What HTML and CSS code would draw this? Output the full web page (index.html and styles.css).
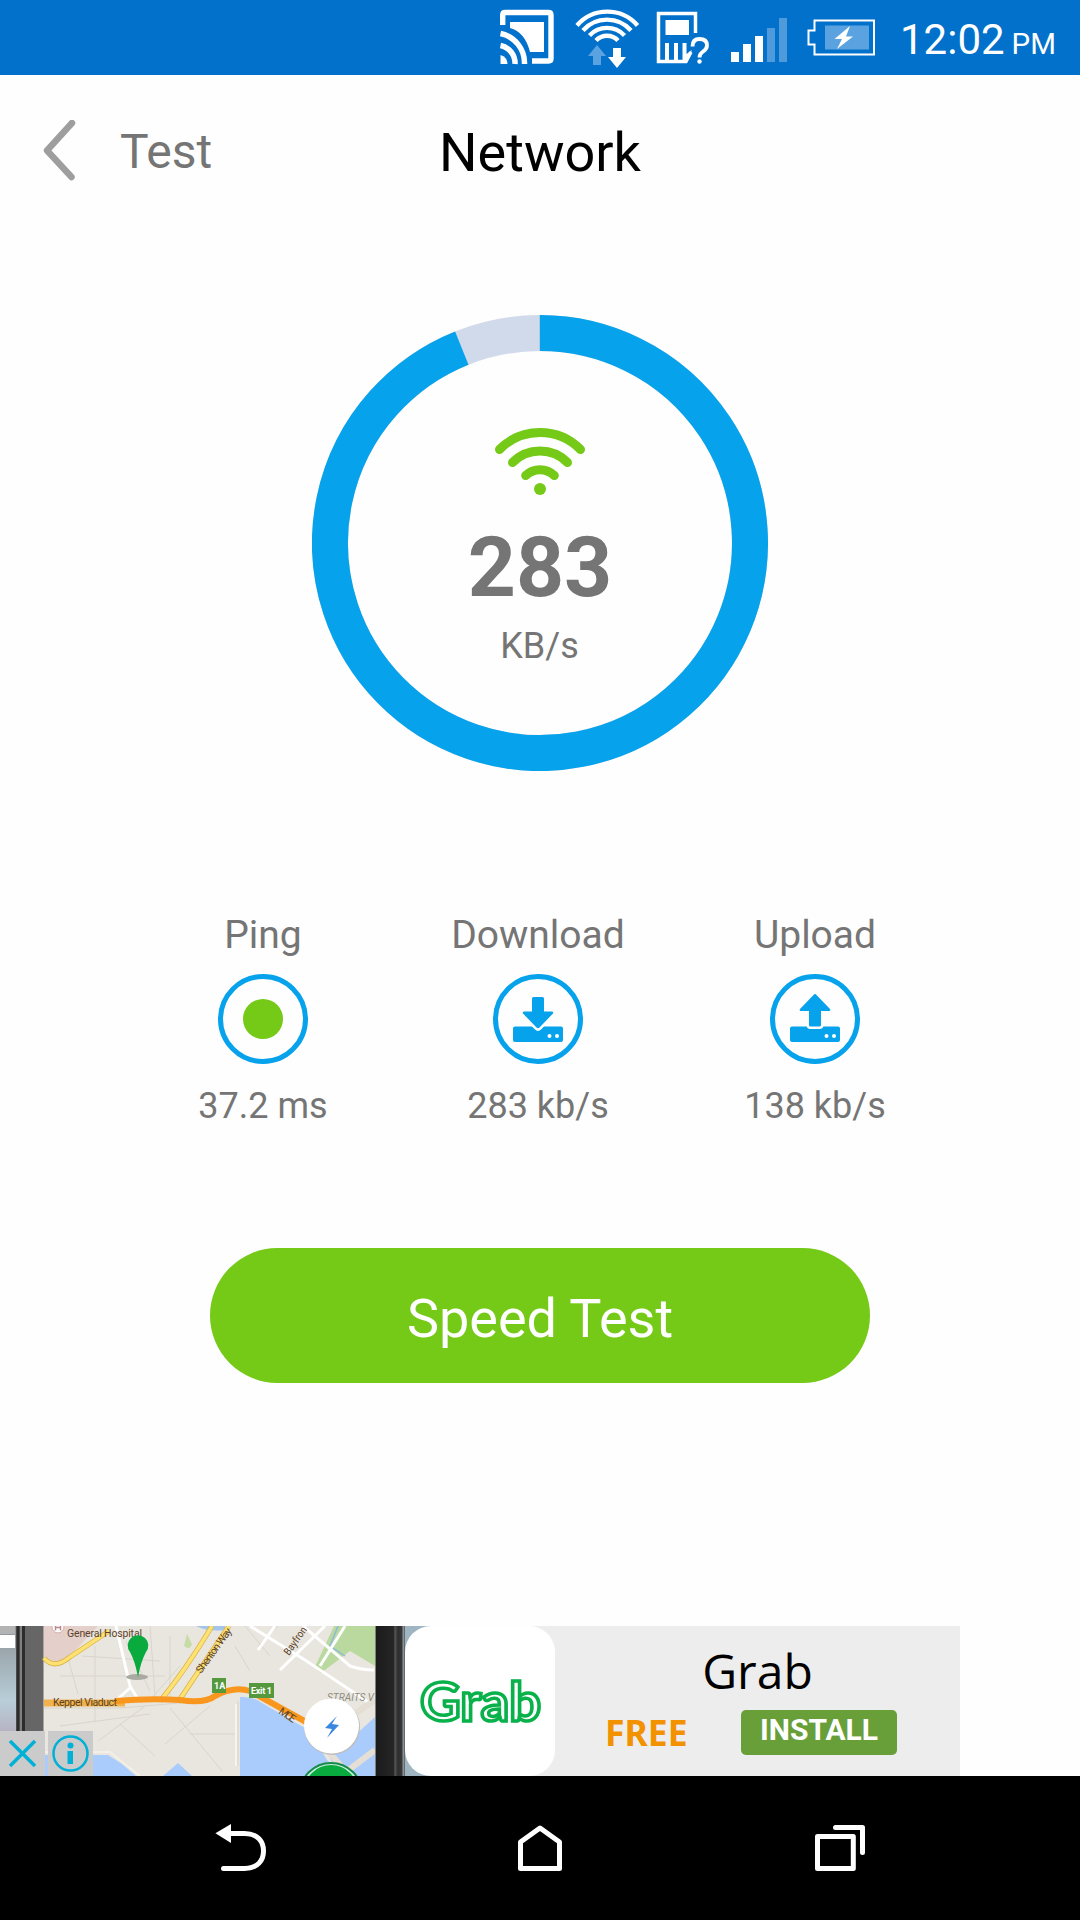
FILE: index.html
```html
<!DOCTYPE html>
<html lang="en">
<head>
  <meta charset="UTF-8">
  <meta name="viewport" content="width=device-width, initial-scale=1.0">
  <title>Network</title>
  <link rel="stylesheet" href="styles.css">
</head>
<body>
  <div class="status-bar">
    <svg class="status-icons" width="380" height="75" viewBox="500 0 380 75" fill="none">
      <!-- cast -->
      <path d="M502.700 25V15Q502.700 12.500 505.200 12.500H548.500Q551 12.500 551 15V58.500Q551 61 548.500 61H532" stroke="#fff" stroke-width="5.400"/>
      <path d="M510 22H544V52H530Q525 32 510 28Z" fill="#fff"/>
      <path d="M500.500 33.500A30 30 0 0 1 524.500 64M500.500 45.500A18 18 0 0 1 515 64" stroke="#fff" stroke-width="5.500"/>
      <path d="M500.500 55A9 9 0 0 1 507.500 64H500.500Z" fill="#fff"/>
      <!-- wifi -->
      <g stroke="#fff" stroke-width="4.400">
        <path d="M577 25.500A40 40 0 0 1 637.500 25.500"/>
        <path d="M583 30.500A32 32 0 0 1 631 30.500"/>
        <path d="M589.500 35.500A24 24 0 0 1 624.500 35.500"/>
        <path d="M596 40.500A15 15 0 0 1 618 40.500"/>
      </g>
      <path d="M597 45L606 56H601V65H593V56H588Z" fill="#5ba2e0"/>
      <path d="M613 48H621V57H626L617 68L608 57H613Z" fill="#fff"/>
      <!-- sim -->
      <path d="M695.500 33V13.500H658.500V61.500H686L691 52" stroke="#fff" stroke-width="3.500"/>
      <path d="M665.500 20H689V35H665.500ZM665 43H669V60H665ZM674 43H678V60H674ZM682.500 43H686.500V54L692 50L687 62H682.500Z" fill="#fff"/>
      <path d="M692.500 46.500Q692.500 39 699.500 39Q707 39 707 45.500Q707 49 702.500 52Q699.500 54 699.500 57.500" stroke="#fff" stroke-width="3.800"/>
      <circle cx="699.500" cy="61.500" r="2.200" fill="#fff"/>
      <!-- signal -->
      <path d="M731 52H739V62H731ZM743 44H751V62H743ZM755 36H763V62H755Z" fill="#fff"/>
      <path d="M767 28H775V62H767ZM779 18H787V62H779Z" fill="#4f9adb"/>
      <!-- battery -->
      <path d="M814.500 20.500H874V54.500H814.500V44.500H808.500V30.500H814.500Z" stroke="#fff" stroke-width="2"/>
      <path d="M825 25.500H869V49.500H825Z" fill="#5ba2e0"/>
      <path d="M850 26L834.500 39H842L837 49L853 36.500H846Z" fill="#fff"/>
    </svg>
    <span class="clock">12:02</span><span class="meridiem">PM</span>
  </div>

  <div class="header">
    <div class="back">
      <svg width="34" height="62" viewBox="0 0 34 62" fill="none">
        <path d="M29 3L4 30.500L28.500 57" stroke="#9e9e9e" stroke-width="6.500" stroke-linecap="round" stroke-linejoin="round"/>
      </svg>
      <span>Test</span>
    </div>
    <h1>Network</h1>
  </div>

  <div class="gauge">
    <svg class="ring" width="456" height="456" viewBox="0 0 456 456" fill="none" stroke-width="36">
      <circle cx="228" cy="228" r="210" stroke="#d0daea"/>
      <path d="M227.800 18A210 210 0 1 1 149.800 33.100" stroke="#06a2eb"/>
    </svg>
    <svg width="92" height="70" viewBox="0 0 92 70" fill="none" stroke="#74ca16" stroke-width="9" stroke-linecap="round">
      <path d="M5.500 22.500A56.700 56.700 0 0 1 86.500 22.500"/>
      <path d="M18.500 35.500A38.900 38.900 0 0 1 73.500 35.500"/>
      <path d="M31.700 48.500A20.500 20.500 0 0 1 60.300 48.500"/>
      <circle cx="46" cy="62" r="6" fill="#74ca16" stroke="none"/>
    </svg>
    <div class="speed">283</div>
    <div class="unit">KB/s</div>
  </div>

  <div class="stats">
    <div class="stat">
      <div class="label">Ping</div>
      <svg width="90" height="90" viewBox="0 0 90 90">
        <circle cx="45" cy="45" r="42.500" fill="none" stroke="#06a2eb" stroke-width="5"/>
        <circle cx="45" cy="45" r="20" fill="#74ca16"/>
      </svg>
      <div class="value">37.2 ms</div>
    </div>
    <div class="stat">
      <div class="label">Download</div>
      <svg width="90" height="90" viewBox="0 0 90 90">
        <circle cx="45" cy="45" r="42.500" fill="none" stroke="#06a2eb" stroke-width="5"/>
        <rect x="20" y="52.500" width="50" height="15.500" rx="2" fill="#06a2eb"/>
        <path d="M40.500 23H49.500Q51 23 51 24.500V37.500H59Q61 38 60 39.500L46.500 53.500Q45 55 43.500 53.500L30 39.500Q29 38 31 37.500H39V24.500Q39 23 40.500 23Z" fill="#06a2eb" stroke="#fefefe" stroke-width="5" paint-order="stroke"/>
        <circle cx="56.500" cy="62" r="2" fill="#fefefe"/>
        <circle cx="64" cy="62" r="2" fill="#fefefe"/>
      </svg>
      <div class="value">283 kb/s</div>
    </div>
    <div class="stat">
      <div class="label">Upload</div>
      <svg width="90" height="90" viewBox="0 0 90 90">
        <circle cx="45" cy="45" r="42.500" fill="none" stroke="#06a2eb" stroke-width="5"/>
        <rect x="20" y="52.500" width="50" height="15.500" rx="2" fill="#06a2eb"/>
        <path d="M43.500 21Q45 19 46.500 21L60 35Q61 36.500 59 37H51V51Q51 52.500 49.500 52.500H40.500Q39 52.500 39 51V37H31Q29 36.500 30 35Z" fill="#06a2eb" stroke="#fefefe" stroke-width="5" paint-order="stroke"/>
        <circle cx="56.500" cy="62" r="2" fill="#fefefe"/>
        <circle cx="64" cy="62" r="2" fill="#fefefe"/>
      </svg>
      <div class="value">138 kb/s</div>
    </div>
  </div>

  <button class="btn">Speed Test</button>

  <div class="ad">
    <svg class="ad-map" width="405" height="150" viewBox="0 0 405 150" fill="none">
      <defs>
        <linearGradient id="photo" x1="0" y1="0" x2="0" y2="1">
          <stop offset="0" stop-color="#8d9498"/>
          <stop offset=".5" stop-color="#b8ced8"/>
          <stop offset="1" stop-color="#b58ba5"/>
        </linearGradient>
        <linearGradient id="edge">
          <stop offset="0" stop-color="#1a1a1a"/>
          <stop offset=".6" stop-color="#262626"/>
          <stop offset=".65" stop-color="#555"/>
          <stop offset=".75" stop-color="#2c2c2c"/>
          <stop offset="1" stop-color="#444"/>
        </linearGradient>
      </defs>
      <rect width="405" height="150" fill="#e9e6df"/>
      <!-- left phone edge -->
      <rect width="18" height="150" fill="url(#photo)"/>
      <rect width="15" height="8" fill="#b3b3b3"/>
      <rect y="9" width="15" height="13" fill="#fff"/>
      <rect x="16" width="27.500" height="150" fill="#666"/>
      <path d="M18 0V150M23.500 0V150" stroke="#2c2c2c" stroke-width="3"/>
      <path d="M21 0V150" stroke="#999"/>
      <!-- areas -->
      <path d="M44 0H98L70 30Q58 42 44 34Z" fill="#e5cfcb"/>
      <path d="M196 0H225V4Q208 6 196 0Z" fill="#a3c5ea"/>
      <path d="M334 0H375V40L350 25L321 47L315 41Z" fill="#bad99f"/>
      <path d="M187 8L192 18Q190 25 184 20Z" fill="#c7dca5"/>
      <path d="M44 129H108L122 138L136 150H44ZM163 150L178 137L192 150ZM240 71Q252 70 262 77L310 105L327 134L345 150H240ZM375 91V150H340L330 132Z" fill="#a9ccfd"/>
      <path d="M44 126H110L140 150" stroke="#f3f0ea" stroke-width="2"/>
      <path d="M338 0L330 20L345 30" stroke="#8fb9dd" stroke-width="1.500"/>
      <!-- minor streets -->
      <g stroke="#d9d5cc">
        <path d="M44 82H120L215 74M66 25L78 68M60 50H165M82 30L160 35M95 20V95M150 0L155 70M126 15L150 65M170 10V75M120 98L155 130M60 100L150 88M98 115L145 80M165 118L210 80M170 82L222 145M180 40L150 74M190 108H235M238 75V140M235 20L250 45M278 0L258 20M245 0L270 30"/>
      </g>
      <path d="M116 0L130 60L139 75M130 62L112 78M250 0L305 34L371 78M275 0L258 24M325 0L280 44M345 0L320 40M303 0L350 40Q362 44 374 44" stroke="#fff" stroke-width="3"/>
      <path d="M236 140V78" stroke="#f6f4ee" stroke-width="2"/>
      <path d="M44 32Q54 44 70 31L109 5M212 0Q185 45 160 75M229 0L178 76" stroke="#d8b445" stroke-width="5"/>
      <path d="M44 32Q54 44 70 31L109 5M212 0Q185 45 160 75M229 0L178 76" stroke="#ffe073" stroke-width="3.500"/>
      <path d="M306 99L335 133L346 146L375 124M340 98L375 74" stroke="#e4ded4" stroke-width="6"/>
      <!-- expressway -->
      <path d="M44 77H125" stroke="#f2b34c" stroke-width="7"/>
      <path d="M115 75Q150 72 180 74Q204 78 215 70Q234 60 250 65L308 97" stroke="#f8961d" stroke-width="6"/>
      <!-- labels -->
      <g class="map-label">
        <circle cx="58" cy="1" r="6" fill="#fff" stroke="#d5aba8"/>
        <path d="M55.500 0V4.500M60.500 0V4.500M55.500 1.500H60.500" stroke="#b98a88" stroke-width="1.500"/>
        <text x="67" y="11" textLength="75">General Hospital</text>
        <text x="53" y="80" textLength="64">Keppel Viaduct</text>
        <text transform="translate(201 48) rotate(-54)" textLength="53">Shenton Way</text>
        <text transform="translate(289 30) rotate(-55)" textLength="32" lengthAdjust="spacingAndGlyphs">Bayfron</text>
        <text transform="translate(278 87) rotate(34)" textLength="18">MCE</text>
        <text class="faded" x="327" y="75" textLength="47" lengthAdjust="spacingAndGlyphs">STRAITS V</text>
      </g>
      <path d="M212 52H226V67H212ZM249 57H274V72H249Z" fill="#55993f"/>
      <text class="exit" x="214" y="63">1A</text>
      <text class="exit" x="251" y="68" textLength="21">Exit 1</text>
      <!-- pin -->
      <ellipse cx="137" cy="51" rx="11" ry="3" fill="#a9aaa2"/>
      <path d="M138 51Q135 35 130 26A10.300 10.300 0 1 1 146 26Q141 35 138 51Z" fill="#09ab3f"/>
      <!-- quick booking -->
      <circle cx="332" cy="101" r="28" fill="#bdbdbd"/>
      <circle cx="331.500" cy="100" r="27.500" fill="#fff"/>
      <path d="M337 90L325 102L332 103L327 112L339 99L332 98Z" fill="#3a86e0"/>
      <circle cx="331" cy="166" r="28" fill="#09ab3f" stroke="#c9eee2" stroke-width="2"/>
      <circle cx="331" cy="168" r="31" stroke="#168b46" stroke-width="2"/>
      <!-- right phone edge -->
      <rect x="375.500" width="30" height="150" fill="url(#edge)"/>
      <path d="M403.500 0V150" stroke="#8a9296" stroke-width="2"/>
      <!-- ad badges -->
      <path d="M0 105H45V150H0ZM48 105H93V150H48Z" fill="#cbcbcb"/>
      <path d="M10 115L35 140M35 115L10 140" stroke="#00b0d6" stroke-width="3.500"/>
      <circle cx="70.500" cy="127.500" r="17" stroke="#00b0d6" stroke-width="2.500"/>
      <circle cx="70.500" cy="119.500" r="3" fill="#00b0d6"/>
      <path d="M67.500 125H73V138H67.500Z" fill="#00b0d6"/>
    </svg>
    <div class="ad-logo">
      <svg width="150" height="150" viewBox="0 0 150 150">
        <text class="wordmark" x="15" y="95" textLength="121" lengthAdjust="spacingAndGlyphs">Grab</text>
      </svg>
    </div>
    <div class="ad-info">
      <div class="ad-title">Grab</div>
      <div class="ad-row">
        <span class="price">FREE</span>
        <span class="install">INSTALL</span>
      </div>
    </div>
  </div>

  <div class="nav-bar">
    <svg width="54" height="54" viewBox="213 1820 54 54" fill="none" stroke="#fff" stroke-width="5" stroke-linecap="round">
      <path d="M229 1833.400H244.500C258 1833.400 263.500 1842 263.500 1851S258 1868.500 244.500 1868.500H223.500"/>
      <path d="M215.400 1833.300L231 1824V1843Z" fill="#fff" stroke="none"/>
    </svg>
    <svg width="54" height="54" viewBox="513 1820 54 54" fill="none" stroke="#fff" stroke-width="5" stroke-linejoin="round">
      <path d="M540 1828L559.500 1842V1868.500H520.500V1842Z"/>
    </svg>
    <svg width="54" height="54" viewBox="813 1820 54 54" fill="none" stroke="#fff" stroke-width="5" stroke-linecap="round" stroke-linejoin="round">
      <path d="M817.500 1836.500H853.300V1868.500H817.500Z"/>
      <path d="M835.500 1827.500H862.500V1852.500"/>
    </svg>
  </div>
</body>
</html>
```
FILE: styles.css
```css
* {
  box-sizing: border-box;
}
body {
  font-family: Roboto, sans-serif;
  background-color: #fefefe;
  color: #757575;
  display: flex;
  flex-direction: column;
  height: 1920px;
  margin: 0;
  overflow: hidden;
}
svg {
  display: block;
  flex: none;
}
.status-bar {
  display: flex;
  align-items: baseline;
  height: 75px;
  padding-left: 500px;
  background-color: #0271cb;
  color: white;
  line-height: 79px;
  white-space: nowrap;
}
.status-icons {
  align-self: flex-start;
}
.clock {
  margin-left: 20px;
  font-size: 42px;
}
.meridiem {
  margin-left: 7px;
  font-size: 29.5px;
}
.header {
  display: grid;
  grid-template-columns: 1fr auto 1fr;
  align-items: center;
  height: 155px;
  padding: 0 43px;
}
.back {
  display: flex;
  align-items: center;
  gap: 43px;
  height: 62px;
  margin-bottom: 3px;
  font-size: 48px;
}
.back span {
  padding-top: 1px;
}
.header h1 {
  margin: 0;
  color: black;
  font-size: 54px;
  font-weight: 400;
}
.gauge {
  position: relative;
  display: flex;
  flex-direction: column;
  align-items: center;
  align-self: center;
  width: 456px;
  height: 456px;
  margin-top: 85px;
  padding-top: 112px;
}
.ring {
  position: absolute;
  top: 0;
  left: 0;
}
.speed {
  margin-top: 21px;
  font-size: 84px;
  font-weight: 700;
  line-height: 100px;
}
.unit {
  margin-top: 6px;
  padding-right: 1px;
  font-size: 36px;
  line-height: 44px;
}
.stats {
  display: flex;
  justify-content: center;
  margin-top: 141px;
}
.stat {
  display: flex;
  flex-direction: column;
  align-items: center;
  width: 276px;
}
.stat:nth-child(2) {
  width: 274px;
}
.stat:last-child {
  width: 280px;
}
.label {
  margin-bottom: 16px;
  font-size: 39px;
  line-height: 46px;
}
.value {
  margin-top: 21px;
  font-size: 36px;
  line-height: 42px;
}
.btn {
  align-self: center;
  width: 660px;
  height: 135px;
  margin-top: 121px;
  padding: 6px 0 0;
  border: none;
  border-radius: 68px;
  background-color: #74ca16;
  color: white;
  font-family: inherit;
  font-size: 54px;
}
.ad {
  display: flex;
  width: 960px;
  height: 150px;
  margin-top: auto;
  background-color: #ededed;
}
.map-label {
  fill: #5c4329;
  font-size: 10.5px;
}
.map-label .faded {
  fill: #8f8b80;
  font-style: italic;
}
.exit {
  fill: white;
  font-size: 9px;
  font-weight: 700;
}
.ad-logo {
  background: linear-gradient(90deg, #9fb5c1 40px, #ededed 40px);
}
.ad-logo svg {
  border-radius: 26px;
  background-color: white;
}
.wordmark {
  fill: white;
  stroke: #09b14b;
  stroke-width: 3.5px;
  font-family: Lato, sans-serif;
  font-size: 54px;
  font-weight: 700;
}
.ad-info {
  flex: 1;
  padding: 17px 0 0 50px;
}
.ad-title {
  margin-right: 50px;
  color: black;
  font-family: "Open Sans", sans-serif;
  font-size: 48px;
  line-height: 56px;
  text-align: center;
}
.ad-row {
  display: flex;
  gap: 52px;
  margin-top: 11px;
}
.price {
  width: 84px;
  color: #f39200;
  font-family: "Noto Sans", sans-serif;
  font-size: 35.5px;
  font-weight: 700;
  line-height: 45px;
}
.install {
  width: 156px;
  height: 45px;
  border-radius: 5px;
  background-color: #689f38;
  color: white;
  font-size: 30px;
  font-weight: 700;
  line-height: 40px;
  text-align: center;
}
.nav-bar {
  display: flex;
  justify-content: space-between;
  height: 144px;
  padding: 44px 213px 0;
  background-color: black;
}
```
